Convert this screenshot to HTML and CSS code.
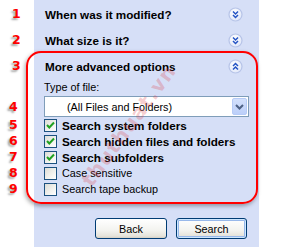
FILE: index.html
```html
<!DOCTYPE html>
<html>
<head>
<meta charset="utf-8">
<link rel="stylesheet" href="styles.css">
</head>
<body>
<div class="page">
  <div class="row head">
    <span class="num">1</span>
    <span class="title">When was it modified?</span>
    <svg class="chev" width="15" height="15" viewBox="0 0 15 15"><defs><radialGradient id="g1" cx="0.4" cy="0.35" r="0.7"><stop offset="0" stop-color="#ffffff"/><stop offset="1" stop-color="#dfe6f8"/></radialGradient></defs><circle cx="7.5" cy="7.5" r="6.5" fill="url(#g1)" stroke="#b7c4e8" stroke-width="1.2"/><path d="M5 4.5 L7.5 7 L10 4.5 M5 8 L7.5 10.5 L10 8" fill="none" stroke="#2353c4" stroke-width="1.5"/></svg>
  </div>
  <div class="row head">
    <span class="num">2</span>
    <span class="title">What size is it?</span>
    <svg class="chev" width="15" height="15" viewBox="0 0 15 15"><circle cx="7.5" cy="7.5" r="6.5" fill="url(#g1)" stroke="#b7c4e8" stroke-width="1.2"/><path d="M5 4.5 L7.5 7 L10 4.5 M5 8 L7.5 10.5 L10 8" fill="none" stroke="#2353c4" stroke-width="1.5"/></svg>
  </div>
  <div class="row head">
    <span class="num">3</span>
    <span class="title">More advanced options</span>
    <svg class="chev" width="15" height="15" viewBox="0 0 15 15"><circle cx="7.5" cy="7.5" r="6.5" fill="url(#g1)" stroke="#b7c4e8" stroke-width="1.2"/><path d="M5 7 L7.5 4.5 L10 7 M5 10.5 L7.5 8 L10 10.5" fill="none" stroke="#2353c4" stroke-width="1.5"/></svg>
  </div>
  <div class="row label">
    <span class="num"></span>
    <span class="text">Type of file:</span>
  </div>
  <div class="row select-row">
    <span class="num inner">4</span>
    <div class="select">
      <span class="select-text">(All Files and Folders)</span>
      <span class="select-btn"><svg width="9" height="6" viewBox="0 0 9 6"><path d="M1 1 L4.5 4.5 L8 1" fill="none" stroke="#4d6185" stroke-width="2"/></svg></span>
    </div>
  </div>
  <div class="row check">
    <span class="num inner">5</span>
    <span class="cb"><svg width="11" height="11" viewBox="0 0 11 11"><path d="M2 5 L4.3 7.5 L9 2.5" fill="none" stroke="#21a121" stroke-width="2"/></svg></span>
    <span class="lbl bold">Search system folders</span>
  </div>
  <div class="row check">
    <span class="num inner">6</span>
    <span class="cb"><svg width="11" height="11" viewBox="0 0 11 11"><path d="M2 5 L4.3 7.5 L9 2.5" fill="none" stroke="#21a121" stroke-width="2"/></svg></span>
    <span class="lbl bold">Search hidden files and folders</span>
  </div>
  <div class="row check">
    <span class="num inner">7</span>
    <span class="cb"><svg width="11" height="11" viewBox="0 0 11 11"><path d="M2 5 L4.3 7.5 L9 2.5" fill="none" stroke="#21a121" stroke-width="2"/></svg></span>
    <span class="lbl bold">Search subfolders</span>
  </div>
  <div class="row check">
    <span class="num inner">8</span>
    <span class="cb"></span>
    <span class="lbl">Case sensitive</span>
  </div>
  <div class="row check">
    <span class="num inner">9</span>
    <span class="cb"></span>
    <span class="lbl">Search tape backup</span>
  </div>
  <div class="buttons">
    <button class="btn">Back</button>
    <button class="btn default">Search</button>
  </div>
  <div class="annot-box"></div>
  <div class="watermark">thuthuat.vn</div>
</div>
</body>
</html>
```
FILE: styles.css
```css
* { box-sizing: border-box; }
html, body { margin: 0; padding: 0; background: #fff; }
.page {
  position: relative;
  width: 289px;
  height: 247px;
  overflow: hidden;
  padding-top: 1px;
  background: linear-gradient(to right, #fff 0, #fff 34px, #d6dff7 34px, #d6dff7 259px, #fff 259px);
  font-family: "Liberation Sans", Arial, sans-serif;
  font-size: 10.8px;
  color: #000;
}
.row { display: flex; align-items: center; }
.num {
  flex: none;
  width: 34px;
  padding-left: 12px;
  font-family: "DejaVu Sans", Verdana, sans-serif;
  font-weight: bold;
  font-size: 12.5px;
  color: #ff0000;
  text-shadow: -2px 2px 2px rgba(0, 0, 0, 0.35);
  line-height: 14px;
}
.num.inner { padding-left: 9px; }
.head { height: 26px; }
.title {
  flex: 1;
  padding-left: 11px;
  font-weight: bold;
  font-size: 11.7px;
}
.chev { flex: none; margin-right: 46px; }
.label { height: 14px; margin-top: 1px; }
.label .text { padding-left: 10px; }
.select-row { margin-top: 2px; height: 21px; }
.select {
  margin-left: 10px;
  width: 205px;
  height: 21px;
  border: 1px solid #7f9db9;
  background: #fff;
  display: flex;
  align-items: center;
}
.select-text { flex: 1; padding-left: 22px; }
.select-btn {
  flex: none;
  width: 15px;
  height: 17px;
  margin-right: 1px;
  border: 1px solid #b6cbf7;
  border-radius: 2px;
  background: linear-gradient(#d3e0fc, #bccff9);
  display: flex;
  align-items: center;
  justify-content: center;
}
.check { height: 16px; align-items: flex-start; }
.check .num { margin-top: 1px; }
.cb {
  flex: none;
  width: 13px;
  height: 13px;
  margin-top: 2px;
  margin-left: 10px;
  border: 1px solid #1c5180;
  background: linear-gradient(135deg, #dcdcd6, #f6f6f3 70%, #ffffff);
  display: flex;
  align-items: center;
  justify-content: center;
}
.lbl { margin-left: 5px; line-height: 17px; white-space: nowrap; }
.lbl.bold { font-weight: bold; font-size: 11.7px; }
.buttons {
  display: flex;
  justify-content: flex-end;
  gap: 9px;
  margin-top: 21px;
  margin-right: 42px;
}
.btn {
  width: 72px;
  height: 21px;
  padding: 0;
  border: 1px solid #003c74;
  border-radius: 3px;
  background: linear-gradient(#ffffff, #f3f3ef 60%, #e5e3da 90%, #d6d0c5);
  font-family: "Liberation Sans", Arial, sans-serif;
  font-size: 10.8px;
  color: #000;
}
.btn.default {
  width: 71px;
  box-shadow: inset 0 0 0 1px #cee7ff, inset 0 0 0 2px #98b8ea;
}
.annot-box {
  position: absolute;
  left: 26px;
  top: 51px;
  width: 232px;
  height: 153px;
  border: 2px solid #ff0000;
  border-radius: 15px;
  box-shadow: -1px 2px 4px rgba(0, 0, 0, 0.35);
  pointer-events: none;
}
.watermark {
  position: absolute;
  left: 86px;
  top: 172px;
  transform: rotate(-54deg);
  transform-origin: left center;
  font-family: "DejaVu Sans", sans-serif;
  font-weight: bold;
  font-size: 20px;
  color: rgba(220, 60, 70, 0.26);
  letter-spacing: 1px;
  pointer-events: none;
}
```
